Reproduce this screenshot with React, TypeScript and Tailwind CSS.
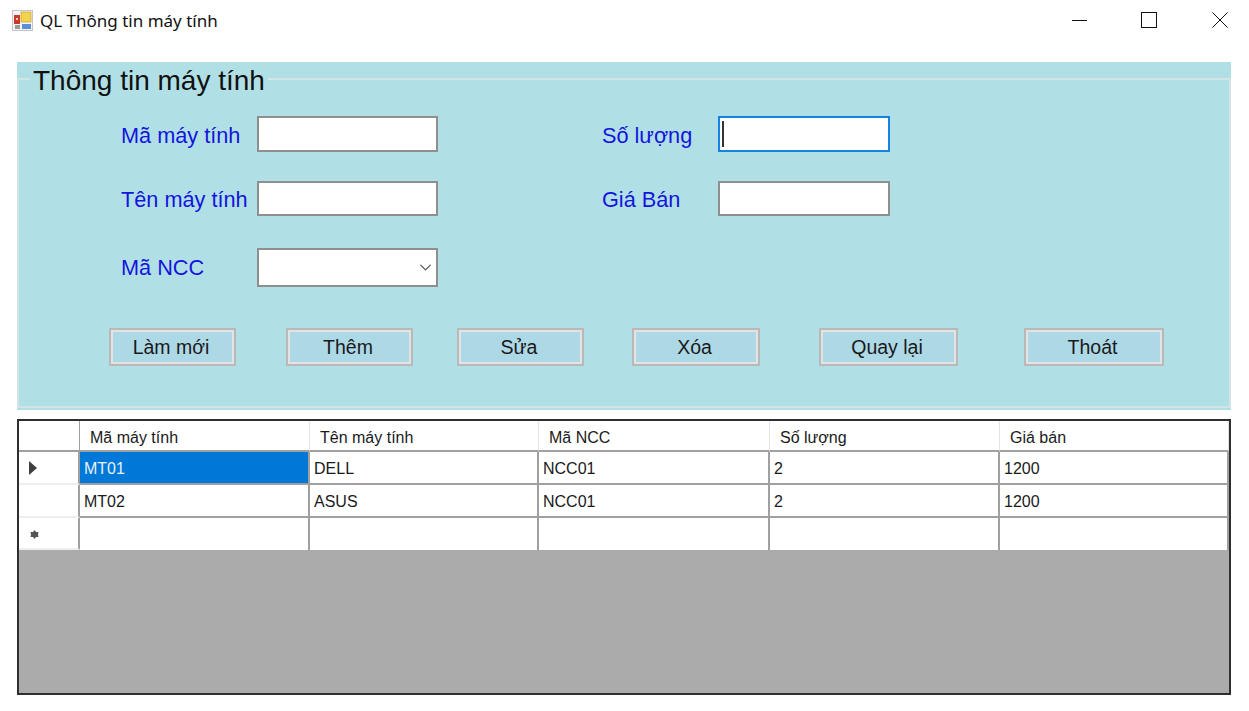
import { ChevronDown } from 'lucide-react';

const buttons = [
  { label: 'Làm mới', className: 'w-[127px] ml-[90px]' },
  { label: 'Thêm', className: 'w-[127px] ml-[50px]' },
  { label: 'Sửa', className: 'w-[127px] ml-[44px]' },
  { label: 'Xóa', className: 'w-[128px] ml-[48px]' },
  { label: 'Quay lại', className: 'w-[139px] ml-[59px]' },
  { label: 'Thoát', className: 'w-[140px] ml-[66px]' },
];

const columns = ['Mã máy tính', 'Tên máy tính', 'Mã NCC', 'Số lượng', 'Giá bán'];

const rows = [
  ['MT01', 'DELL', 'NCC01', '2', '1200'],
  ['MT02', 'ASUS', 'NCC01', '2', '1200'],
  ['', '', '', '', ''],
];

const AppIcon = () => (
  <svg width="21" height="21" viewBox="0 0 21 21" className="shrink-0 -mt-[2px]">
    <rect x="0.5" y="0.5" width="20" height="20" fill="#f4f4f4" stroke="#c4c4c4" />
    <rect x="2" y="5" width="6" height="9" fill="#c8392b" />
    <rect x="4" y="8" width="2" height="2" fill="#f5d0c0" />
    <rect x="9" y="2" width="10" height="10" fill="#f3d250" stroke="#c9a227" strokeWidth="0.7" />
    <rect x="10" y="14" width="9" height="5" fill="#5b8fd9" />
    <rect x="3" y="15" width="5" height="4" fill="#9a9a9a" />
  </svg>
);

const WindowButtons = () => (
  <div className="ml-auto flex items-center pr-[21px] -mt-[3px]">
    <svg width="15" height="15" viewBox="0 0 15 15">
      <path d="M0 7.5 H15" stroke="#111" strokeWidth="1" />
    </svg>
    <svg width="16" height="16" viewBox="0 0 16 16" className="ml-[54px]">
      <rect x="0.5" y="0.5" width="15" height="15" fill="none" stroke="#111" strokeWidth="1" />
    </svg>
    <svg width="16" height="16" viewBox="0 0 16 16" className="ml-[55px]">
      <path d="M0.5 0.5 L15.5 15.5 M15.5 0.5 L0.5 15.5" stroke="#111" strokeWidth="1" fill="none" />
    </svg>
  </div>
);

const Label = ({ text, className }: { text: string; className: string }) => (
  <label className={`text-[21.7px] leading-none text-[#1414dc] whitespace-nowrap ${className}`}>{text}</label>
);

const Field = ({ className }: { className: string }) => (
  <div className={`bg-white border-2 border-[#8f8f8f] ${className}`}></div>
);

export default function App() {
  return (
    <div className="w-[1249px] h-[711px] bg-white overflow-hidden font-['Liberation_Sans',Arial,sans-serif]">
      {/* title bar */}
      <div className="h-[43px] flex items-center pl-[12px]">
        <AppIcon />
        <span className="ml-[7px] -mt-[3px] text-[17px] text-[#111] font-['Noto_Sans',sans-serif] leading-none">QL Thông tin máy tính</span>
        <WindowButtons />
      </div>

      {/* form */}
      <div className="mt-[19px] ml-[17px] w-[1214px] h-[348px] bg-[#b0e0e6]">
        <fieldset className="h-[346px] border-2 border-[#d3e3e6]">
          <legend className="ml-[11px] px-[3px] text-[28px] leading-[34px] text-[#111]">
            <span className="block translate-y-[2px]">Thông tin máy tính</span>
          </legend>
          <div className="pt-[20px] pl-[102px] flex">
            <div className="flex flex-col w-[481px]">
              <div className="flex items-center h-[36px]">
                <Label text="Mã máy tính" className="w-[136px] pt-[3px]" />
                <Field className="w-[181px] h-[36px]" />
              </div>
              <div className="flex items-center h-[35px] mt-[29px]">
                <Label text="Tên máy tính" className="w-[136px] pt-[2px]" />
                <Field className="w-[181px] h-[35px]" />
              </div>
              <div className="flex items-center h-[39px] mt-[32px]">
                <Label text="Mã NCC" className="w-[136px]" />
                <div className="w-[181px] h-[39px] bg-white border-2 border-[#8f8f8f] flex items-center justify-end pr-[1px]">
                  <ChevronDown size={19} strokeWidth={1.6} className="text-[#555]" />
                </div>
              </div>
            </div>
            <div className="flex flex-col">
              <div className="flex items-center h-[36px]">
                <Label text="Số lượng" className="w-[116px] pt-[3px]" />
                <div className="w-[172px] h-[36px] bg-white border-2 border-[#1584de] flex items-center pl-[2px]">
                  <div className="w-[2px] h-[26px] bg-[#333]"></div>
                </div>
              </div>
              <div className="flex items-center h-[35px] mt-[29px]">
                <Label text="Giá Bán" className="w-[116px] pt-[2px]" />
                <Field className="w-[172px] h-[35px]" />
              </div>
            </div>
          </div>
          <div className="flex mt-[41px]">
            {buttons.map((b) => (
              <button
                key={b.label}
                className={`h-[38px] border-2 border-[#b9b9b9] bg-[#add8e6] outline-2 -outline-offset-4 outline-[#e3e3e3] pt-[2px] pr-[3px] text-[19.5px] leading-none text-[#1a1a1a] ${b.className}`}
              >
                {b.label}
              </button>
            ))}
          </div>
        </fieldset>
      </div>

      {/* grid */}
      <div className="mt-[9px] ml-[17px] w-[1214px] h-[276px] border-2 border-[#2f2f2f] bg-[#ababab] text-[16px] text-[#1a1a1a]">
        <div className="grid grid-cols-[61px_230px_229px_231px_230px_229px] grid-rows-[31px_33px_33px_32px]">
          <div className="bg-white border-r border-b-2 border-r-[#a0a0a0] border-b-[#a0a0a0]"></div>
          {columns.map((c) => (
            <div key={c} className="bg-white border-r border-b-2 border-r-[#e4e4e4] border-b-[#a0a0a0] pl-[10px] pt-[5px] flex items-center leading-none">
              {c}
            </div>
          ))}
          {rows.map((row, i) => (
            <div key={i} className="contents">
              <div className="bg-white border-r-2 border-r-[#a0a0a0] border-b-2 border-b-[#eeeeee] flex items-center pl-[10px]">
                {i === 0 && (
                  <svg width="8" height="14" viewBox="0 0 8 14">
                    <path d="M0 0 L8 7 L0 14 Z" fill="#404040" />
                  </svg>
                )}
                {i === 2 && (
                  <svg width="9" height="9" viewBox="0 0 9 9" className="ml-[1px] mt-[2px]">
                    <path d="M4.5 0 L6 2 L8.5 2 L8 4.5 L8.5 7 L6 7 L4.5 9 L3 7 L.5 7 L1 4.5 L.5 2 L3 2 Z" fill="#555" />
                  </svg>
                )}
              </div>
              {row.map((cell, j) => (
                <div
                  key={j}
                  className={`border-r-2 border-r-[#a0a0a0] flex items-center pl-[4px] pt-[3px] leading-none ${i < 2 ? 'border-b-2 border-b-[#a0a0a0]' : ''} ${i === 0 && j === 0 ? 'bg-[#0078d7] text-[#e8f2fb]' : 'bg-white'}`}
                >
                  {cell}
                </div>
              ))}
            </div>
          ))}
        </div>
      </div>
    </div>
  );
}
